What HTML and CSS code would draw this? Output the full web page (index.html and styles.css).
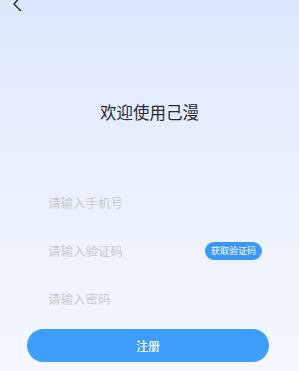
FILE: index.html
```html
<!DOCTYPE html>
<html lang="zh">
<head>
<meta charset="utf-8">
<link rel="stylesheet" href="styles.css">
</head>
<body>
<div class="page">
  <div class="header">
    <svg class="back" width="14" height="12" viewBox="0 0 14 12"><path d="M10 -3 L4 4 L11 11" fill="none" stroke="#222" stroke-width="1.4"/></svg>
  </div>
  <h1 class="title">欢迎使用己漫</h1>
  <div class="form">
    <div class="row"><span class="ph">请输入手机号</span></div>
    <div class="row"><span class="ph">请输入验证码</span><span class="code-btn">获取验证码</span></div>
    <div class="row"><span class="ph">请输入密码</span></div>
  </div>
  <div class="submit">注册</div>
</div>
</body>
</html>
```
FILE: styles.css
```css
html, body { margin: 0; padding: 0; }
body {
  width: 299px;
  height: 371px;
  overflow: hidden;
  background: linear-gradient(180deg, #dce8fd 0%, #e9f0fd 45%, #f4f7fe 100%);
  font-family: "Noto Sans CJK SC", "Noto Sans", sans-serif;
}
.page { display: flex; flex-direction: column; }
.header { height: 12px; padding-left: 10px; }
.back { display: block; }
.title {
  margin: 88px 0 0;
  font-size: 16.5px;
  line-height: 24px;
  font-weight: 400;
  color: #2a2a2e;
  text-align: center;
}
.form { margin-top: 55px; display: flex; flex-direction: column; }
.row {
  height: 48px;
  display: flex;
  align-items: center;
  justify-content: space-between;
  padding: 0 37px 0 48px;
}
.ph { font-size: 12.5px; color: #c7c9ce; line-height: 16px; }
.code-btn {
  width: 57px;
  height: 18px;
  border-radius: 9px;
  background: #3b97f5;
  color: #fff;
  font-size: 9px;
  line-height: 18px;
  text-align: center;
}
.submit {
  margin: 6px 30px 0 27px;
  height: 33px;
  border-radius: 17px;
  background: #3e9cfa;
  color: #fff;
  font-size: 12px;
  font-weight: 500;
  line-height: 33px;
  text-align: center;
}
```
